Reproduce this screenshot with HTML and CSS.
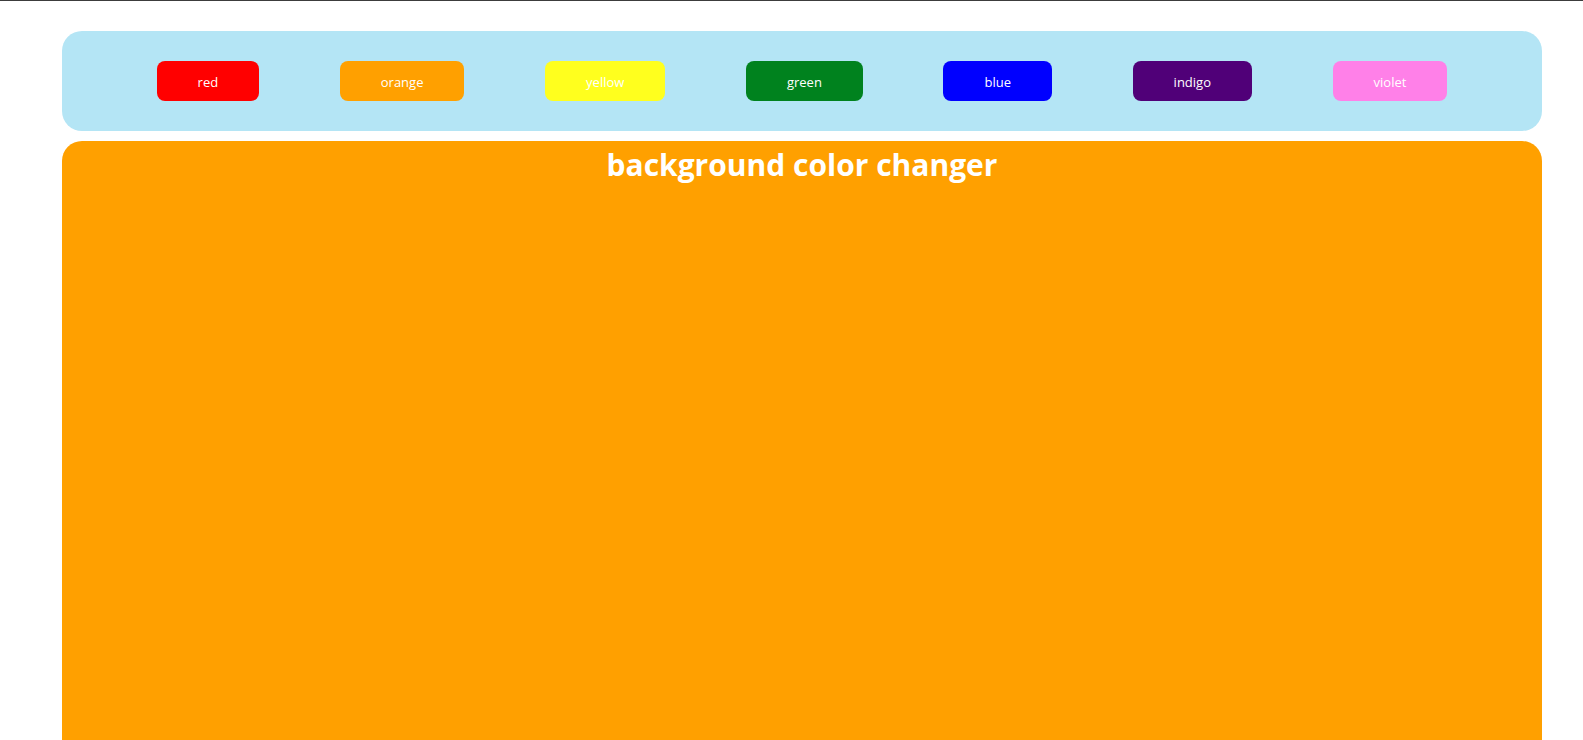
FILE: index.html
```html
<!DOCTYPE html>
<html lang="en">
<head>
<meta charset="utf-8">
<title>background color changer</title>
<link rel="stylesheet" href="styles.css">
</head>
<body>
<div class="page">
  <nav class="palette">
    <button class="swatch swatch-red">red</button>
    <button class="swatch swatch-orange">orange</button>
    <button class="swatch swatch-yellow">yellow</button>
    <button class="swatch swatch-green">green</button>
    <button class="swatch swatch-blue">blue</button>
    <button class="swatch swatch-indigo">indigo</button>
    <button class="swatch swatch-violet">violet</button>
  </nav>
  <main class="canvas">
    <h1 class="title">background color changer</h1>
  </main>
</div>
</body>
</html>
```
FILE: styles.css
```css
html, body {
  margin: 0;
  padding: 0;
  background: #ffffff;
}
body {
  border-top: 1px solid #3c3c3c;
  font-family: "Open Sans", "Noto Sans", sans-serif;
  overflow: hidden;
  height: 739px;
}
.page {
  display: flex;
  flex-direction: column;
  gap: 10px;
  padding: 30px 41px 0 62px;
  height: 100%;
  box-sizing: border-box;
}
.palette {
  height: 100px;
  flex: 0 0 auto;
  background: #b4e5f5;
  border-radius: 20px;
  display: flex;
  align-items: center;
  justify-content: space-evenly;
  padding: 0 14px;
  box-sizing: border-box;
}
.swatch {
  height: 40px;
  padding: 2px 41px 0;
  border: none;
  border-radius: 8px;
  color: #ffffff;
  font-family: inherit;
  font-size: 13px;
  cursor: pointer;
}
.swatch-red { background: #ff0000; }
.swatch-orange { background: #ffa000; }
.swatch-yellow { background: #ffff1e; }
.swatch-green { background: #00821e; }
.swatch-blue { background: #0000ff; }
.swatch-indigo { background: #500078; }
.swatch-violet { background: #ff80e8; }
.canvas {
  flex: 1 1 auto;
  background: #ffa000;
  border-radius: 20px 20px 0 0;
}
.title {
  margin: 0;
  text-align: center;
  color: #ffffff;
  font-size: 30px;
  font-weight: 700;
  line-height: 48px;
}
```
